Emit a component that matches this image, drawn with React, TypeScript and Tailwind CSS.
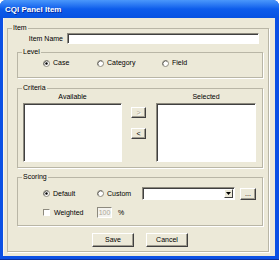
import React from "react";

function Radio({ checked }: { checked?: boolean }) {
  return (
    <svg width="7" height="7" viewBox="0 0 7 7" className="shrink-0">
      <circle cx="3.5" cy="3.5" r="3" fill="#ffffff" stroke="#8d8a7e" strokeWidth="1" />
      <path d="M1.2 5.2 A3 3 0 0 1 5.2 1.2" fill="none" stroke="#55534c" strokeWidth="0.8" />
      {checked && <circle cx="3.5" cy="3.5" r="1.2" fill="#000000" />}
    </svg>
  );
}

function RadioItem({ label, checked, w }: { label: string; checked?: boolean; w: string }) {
  return (
    <div className={`flex items-center gap-[3px] ${w}`}>
      <Radio checked={checked} />
      <span>{label}</span>
    </div>
  );
}

export default function App() {
  return (
    <div className="w-[279px] h-[260px] flex flex-col rounded-t-[6px] overflow-hidden bg-[#0b50e4] font-['Liberation_Sans',Arial,sans-serif] text-[7px] leading-[8px] text-black shadow-[inset_0_-1px_0_#0a2f9c]">
      {/* Title bar */}
      <div className="h-[18px] shrink-0 flex items-center pl-[5px] pt-[1px] bg-gradient-to-b from-[#4a97fb] via-[#0d5ceb] to-[#0752e2]">
        <span className="text-white font-bold text-[8px] leading-[9px] [text-shadow:1px_1px_0_#0a2a9a]">
          CQI Panel Item
        </span>
      </div>
      {/* Client area */}
      <div className="flex-1 ml-[3px] mr-[4px] mb-[4px] bg-[#ECE9D8] pt-[6px] pl-[4px] pr-[6px] pb-[4px] shadow-[inset_1px_0_0_#f6f5ee]">
        <fieldset className="border border-[#b9b6a6] shadow-[1px_1px_0_#ffffff]">
          <legend className="ml-[4px] px-[1px] leading-[8px]">Item</legend>
          <div className="pl-[9px] pr-[5px] pt-[1px] pb-[4px] flex flex-col">
            {/* Item Name row */}
            <div className="flex items-center h-[11px]">
              <span className="w-[46px] text-right shrink-0">Item Name</span>
              <div className="ml-[4px] mr-[4px] flex-1 h-[11px] bg-white border border-t-[#8d8a7e] border-l-[#8d8a7e] border-r-white border-b-white shadow-[inset_1px_1px_0_#404040]" />
            </div>

            {/* Level */}
            <fieldset className="mt-[4px] border border-[#b9b6a6] shadow-[1px_1px_0_#ffffff]">
              <legend className="ml-[4px] px-[1px] leading-[8px]">Level</legend>
              <div className="pt-[1px] pb-[8px] pl-[25px] flex items-center h-[21px]">
                <div className="flex items-center h-[12px]">
                  <RadioItem label="Case" checked w="w-[54px]" />
                  <RadioItem label="Category" w="w-[65px]" />
                  <RadioItem label="Field" w="w-[50px]" />
                </div>
              </div>
            </fieldset>

            {/* Criteria */}
            <fieldset className="mt-[6px] border border-[#b9b6a6] shadow-[1px_1px_0_#ffffff]">
              <legend className="ml-[4px] px-[1px] leading-[8px]">Criteria</legend>
              <div className="pt-[1px] pb-[5px] pl-[5px] flex items-start">
                <div className="flex flex-col items-center w-[99px]">
                  <span className="h-[8px]">Available</span>
                  <div className="mt-[2px] w-[99px] h-[59px] bg-white border border-t-[#8d8a7e] border-l-[#8d8a7e] border-r-white border-b-white shadow-[inset_1px_1px_0_#404040]" />
                </div>
                <div className="ml-[9px] w-[15px] pt-[14px] flex flex-col">
                  <div className="h-[11px] flex items-center justify-center bg-[#ECE9D8] border border-t-white border-l-white border-r-[#404040] border-b-[#404040] shadow-[inset_-1px_-1px_0_#a09d90] text-[#aca899] [text-shadow:1px_1px_0_#ffffff]">
                    &gt;
                  </div>
                  <div className="mt-[10px] h-[11px] flex items-center justify-center bg-[#ECE9D8] border border-t-white border-l-white border-r-[#404040] border-b-[#404040] shadow-[inset_-1px_-1px_0_#a09d90]">
                    &lt;
                  </div>
                </div>
                <div className="ml-[10px] flex flex-col items-center w-[100px]">
                  <span className="h-[8px]">Selected</span>
                  <div className="mt-[2px] w-[100px] h-[59px] bg-white border border-t-[#8d8a7e] border-l-[#8d8a7e] border-r-white border-b-white shadow-[inset_1px_1px_0_#404040]" />
                </div>
              </div>
            </fieldset>

            {/* Scoring */}
            <fieldset className="mt-[5px] border border-[#b9b6a6] shadow-[1px_1px_0_#ffffff]">
              <legend className="ml-[4px] px-[1px] leading-[8px]">Scoring</legend>
              <div className="pt-[6px] pb-[7px] pl-[25px] flex flex-col">
                <div className="flex items-center h-[13px]">
                  <RadioItem label="Default" checked w="w-[54px]" />
                  <RadioItem label="Custom" w="w-[45px]" />
                  <div className="w-[93px] h-[13px] flex justify-end bg-white border border-t-[#8d8a7e] border-l-[#8d8a7e] border-r-white border-b-white shadow-[inset_1px_1px_0_#404040] pr-[1px] pt-[1px] pb-[1px]">
                    <div className="w-[9px] h-full flex items-center justify-center bg-[#ECE9D8] border border-t-white border-l-white border-r-[#404040] border-b-[#404040]">
                      <svg width="5" height="3" viewBox="0 0 5 3">
                        <path d="M0 0 H5 L2.5 3 Z" fill="#000" />
                      </svg>
                    </div>
                  </div>
                  <div className="ml-[5px] w-[16px] h-[12px] flex items-end justify-center pb-[2px] bg-[#ECE9D8] border border-t-white border-l-white border-r-[#404040] border-b-[#404040] shadow-[inset_-1px_-1px_0_#a09d90] leading-[6px]">
                    ...
                  </div>
                </div>
                <div className="mt-[7px] flex items-center h-[11px]">
                  <div className="flex items-center gap-[4px] w-[54px]">
                    <div className="w-[7px] h-[7px] shrink-0 bg-white border border-t-[#8d8a7e] border-l-[#8d8a7e] border-r-white border-b-white" />
                    <span>Weighted</span>
                  </div>
                  <div className="w-[15px] h-[11px] flex items-center justify-center bg-[#f4f3ee] border border-t-[#8d8a7e] border-l-[#8d8a7e] border-r-white border-b-white text-[#aca899] text-[7px]">
                    100
                  </div>
                  <span className="ml-[6px]">%</span>
                </div>
              </div>
            </fieldset>

            {/* Buttons */}
            <div className="mt-[7px] flex justify-center gap-[12px]">
              <div className="w-[42px] h-[14px] flex items-center justify-center bg-[#ECE9D8] border border-t-white border-l-white border-r-[#404040] border-b-[#404040] shadow-[inset_-1px_-1px_0_#a09d90]">
                Save
              </div>
              <div className="w-[42px] h-[14px] flex items-center justify-center bg-[#ECE9D8] border border-t-white border-l-white border-r-[#404040] border-b-[#404040] shadow-[inset_-1px_-1px_0_#a09d90]">
                Cancel
              </div>
            </div>
          </div>
        </fieldset>
      </div>
    </div>
  );
}
